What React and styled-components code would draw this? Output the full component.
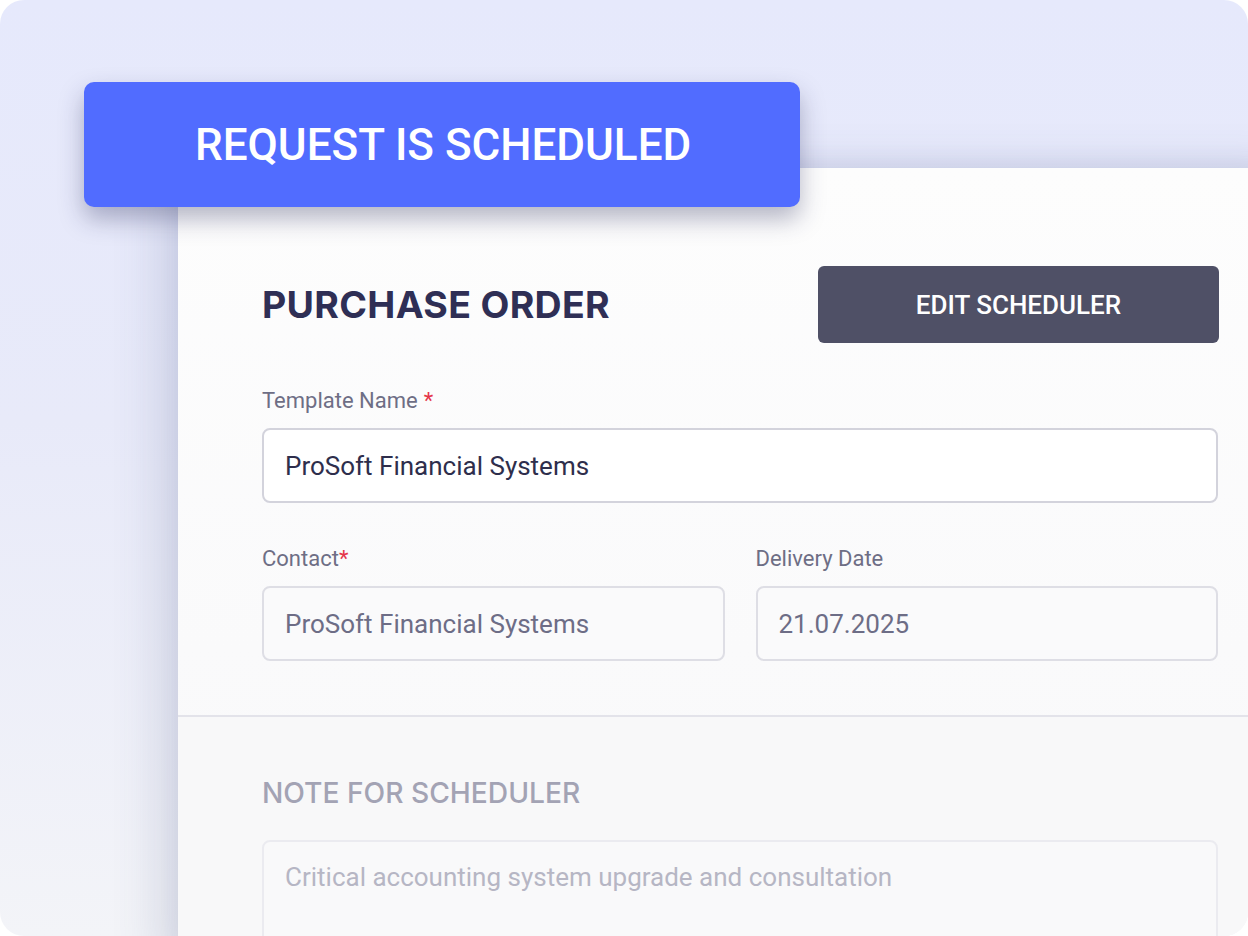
import React from "react";
import styled, { createGlobalStyle } from "styled-components";

const Global = createGlobalStyle`
  html, body { margin: 0; padding: 0; background: #ffffff; }
  body { width: 1248px; height: 936px; overflow: hidden; font-family: Roboto, "Liberation Sans", sans-serif; }
  * { box-sizing: border-box; }
`;

const Stage = styled.div`
  position: relative;
  width: 1248px;
  height: 936px;
  border-radius: 24px;
  overflow: hidden;
  background: linear-gradient(180deg, #e6e9fc 0%, #e8eaf9 45%, #f3f4f8 100%);
  padding: 168px 0 0 178px;
`;

const Card = styled.section`
  width: 1124px;
  height: 800px;
  background: linear-gradient(180deg, #fdfdfd 0%, #fafafb 60%, #f8f8fa 100%);
  box-shadow: -20px 0 44px rgba(70, 78, 130, 0.16), 0 -6px 20px rgba(70, 78, 130, 0.08);
  display: flex;
  flex-direction: column;
`;

const TopSection = styled.div`
  padding: 98px 84px 54px;
  display: flex;
  flex-direction: column;
  border-bottom: 2px solid #e3e3ea;
`;

const BottomSection = styled.div`
  padding: 58px 84px 0;
  display: flex;
  flex-direction: column;
  background: #f8f8f9;
  flex: 1;
`;

const HeaderRow = styled.div`
  display: flex;
  align-items: center;
  justify-content: space-between;
  height: 77px;
  margin-bottom: 45px;
`;

const Title = styled.h1`
  margin: 0;
  font-family: Inter, "Open Sans", sans-serif;
  font-weight: 700;
  font-size: 37.5px;
  letter-spacing: 0.3px;
  color: #2f2f55;
`;

const DarkButton = styled.button`
  width: 401px;
  height: 77px;
  margin-right: -1px;
  border: none;
  border-radius: 6px;
  background: #4f5066;
  color: #ffffff;
  font-family: Roboto, sans-serif;
  font-weight: 500;
  font-size: 26px;
  letter-spacing: 0px;
`;

const Field = styled.div`
  display: flex;
  flex-direction: column;
  gap: 14px;
  margin-bottom: ${(p) => p.$mb || 0}px;
`;

const Label = styled.label`
  font-size: 22px;
  line-height: 26px;
  color: #6e6e85;
`;

const Req = styled.span`
  color: #e5364a;
  margin-left: ${(p) => (p.$gap ? "6px" : "0")};
`;

const Input = styled.div`
  height: 75px;
  border: 2px solid ${(p) => (p.$muted ? "#dedee5" : "#d3d3dc")};
  border-radius: 8px;
  background: ${(p) => (p.$muted ? "#fafafb" : "#ffffff")};
  padding: 0 21px;
  display: flex;
  align-items: center;
  font-size: 26px;
  color: ${(p) => (p.$muted ? "#6d6d86" : "#2e2e4c")};
`;

const Row = styled.div`
  display: grid;
  grid-template-columns: 1fr 1fr;
  gap: 31px;
`;

const NoteTitle = styled.h2`
  margin: 0 0 29px;
  font-family: Inter, "Open Sans", sans-serif;
  font-weight: 500;
  font-size: 28.2px;
  line-height: 36px;
  color: #a3a3b4;
`;

const TextArea = styled.div`
  height: 200px;
  border: 2px solid #ebebf0;
  border-radius: 8px;
  background: #f9f9fa;
  padding: 19px 21px;
  font-size: 26px;
  line-height: 32px;
  color: #b6b6c4;
`;

const Banner = styled.div`
  position: absolute;
  left: 84px;
  top: 82px;
  width: 716px;
  height: 125px;
  border-radius: 10px;
  background: #516cff;
  box-shadow: 0 12px 24px rgba(40, 44, 90, 0.34);
  display: flex;
  align-items: center;
  padding-left: 111px;
  color: #ffffff;
  font-family: Roboto, sans-serif;
  font-weight: 500;
  font-size: 44px;
  letter-spacing: 0px;
`;

export default function App() {
  return (
    <>
      <Global />
      <Stage>
        <Card>
          <TopSection>
            <HeaderRow>
              <Title>PURCHASE ORDER</Title>
              <DarkButton>EDIT SCHEDULER</DarkButton>
            </HeaderRow>
            <Field $mb={43}>
              <Label>
                Template Name<Req $gap>*</Req>
              </Label>
              <Input>ProSoft Financial Systems</Input>
            </Field>
            <Row>
              <Field>
                <Label>
                  Contact<Req>*</Req>
                </Label>
                <Input $muted>ProSoft Financial Systems</Input>
              </Field>
              <Field>
                <Label>Delivery Date</Label>
                <Input $muted>21.07.2025</Input>
              </Field>
            </Row>
          </TopSection>
          <BottomSection>
            <NoteTitle>NOTE FOR SCHEDULER</NoteTitle>
            <TextArea>Critical accounting system upgrade and consultation</TextArea>
          </BottomSection>
        </Card>
        <Banner>REQUEST IS SCHEDULED</Banner>
      </Stage>
    </>
  );
}
